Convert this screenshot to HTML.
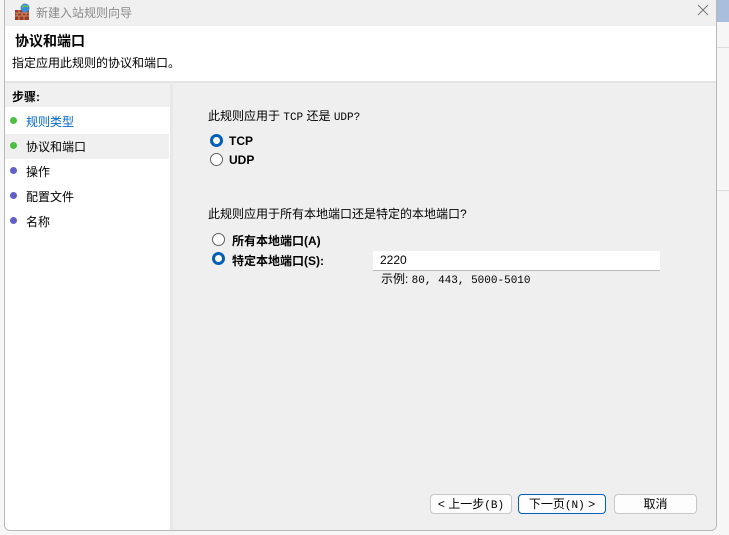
<!DOCTYPE html>
<html><head><meta charset="utf-8"><style>
*{margin:0;padding:0;box-sizing:border-box}
body{width:729px;height:535px;overflow:hidden;background:#f6f6f6;position:relative;font-family:"Liberation Sans","Noto Sans CJK SC",sans-serif;font-size:12px;color:#000}
.a{position:absolute}
.m{font-family:"Liberation Mono","Noto Sans CJK SC",monospace;font-size:11px}
.win{left:4px;top:0;width:713px;height:531px;background:#f0f0f0;border:1px solid #b8b8b8;border-top:none;border-radius:0 0 6px 6px;overflow:hidden}
.rad{position:absolute;width:13px;height:13px;border-radius:50%;border:1px solid #5f5f5f;background:#fff}
.rad.on{border:3.5px solid #005fb8}
.btn{position:absolute;height:20px;border:1px solid #c8c8c8;border-radius:4px;background:#fdfdfd;text-align:center;line-height:18px;font-size:12px}
.dot{position:absolute;width:7px;height:7px;border-radius:50%}
</style></head><body>
<div class="a" style="left:717px;top:0;width:12px;height:22px;background:#a7bfdc"></div>
<div class="a" style="left:717px;top:47px;width:12px;height:1px;background:#ddd"></div>
<div class="a" style="left:717px;top:190px;width:12px;height:1px;background:#ddd"></div>
<div class="win a">
 <div class="a" style="left:0;top:0;width:713px;height:26px;background:#f0f0f0"></div>
 <svg class="a" style="left:9px;top:3px" width="18" height="18" viewBox="0 0 18 18"><rect x="1" y="7" width="14" height="10" fill="#9a3b22"/><path d="M1 10h14M1 13h14M5 7v3M10 7v3M3 10v3M8 10v3M12 10v3M5 13v4M10 13v4" stroke="#d9a080" stroke-width=".8"/><circle cx="11" cy="5" r="4.5" fill="#3a8ed8"/><path d="M8 4q3-2 6 0" stroke="#6cc04a" stroke-width="1.5" fill="none"/></svg>
 <div class="a" style="left:31px;top:4px;color:#8a8a8a;font-size:12px">新建入站规则向导</div>
 <svg class="a" style="left:692px;top:4px" width="12" height="12"><path d="M1 1L11 11M11 1L1 11" stroke="#777" stroke-width="1"/></svg>
 <div class="a" style="left:0;top:26px;width:713px;height:55px;background:#fff"></div>
 <div class="a" style="left:10px;top:31px;font-size:14px;font-weight:bold">协议和端口</div>
 <div class="a" style="left:7px;top:54px">指定应用此规则的协议和端口。</div>
 <div class="a" style="left:0;top:81px;width:713px;height:2px;background:#e4e4e4"></div>
 <div class="a" style="left:0;top:84px;width:165px;height:447px;background:#fff"></div>
 <div class="a" style="left:0;top:84px;width:165px;height:23px;background:#f0f0f0"></div>
 <div class="a" style="left:7px;top:88px;font-weight:bold">步骤:</div>
 <div class="a" style="left:0;top:134px;width:164px;height:25px;background:#f0f0f0"></div>
 <div class="dot" style="left:5px;top:117px;background:#4cc040"></div><div class="a" style="left:21px;top:113px;color:#0066cc">规则类型</div>
 <div class="dot" style="left:5px;top:142px;background:#4cc040"></div><div class="a" style="left:21px;top:138px">协议和端口</div>
 <div class="dot" style="left:5px;top:167px;background:#6060c8"></div><div class="a" style="left:21px;top:163px">操作</div>
 <div class="dot" style="left:5px;top:192px;background:#6060c8"></div><div class="a" style="left:21px;top:188px">配置文件</div>
 <div class="dot" style="left:5px;top:217px;background:#6060c8"></div><div class="a" style="left:21px;top:213px">名称</div>
 <div class="a" style="left:165px;top:84px;width:3px;height:447px;background:#e8e8e8"></div>
 <div class="a" style="left:168px;top:84px;width:545px;height:447px;background:#efefef"></div>
 <div class="a" style="left:203px;top:107px">此规则应用于 <span class="m">TCP</span> 还是 <span class="m">UDP?</span></div>
 <div class="rad on" style="left:205px;top:134px"></div><div class="a" style="left:224px;top:134px;font-weight:bold">TCP</div>
 <div class="rad" style="left:205px;top:153px"></div><div class="a" style="left:224px;top:153px;font-weight:bold">UDP</div>
 <div class="a" style="left:203px;top:205px">此规则应用于所有本地端口还是特定的本地端口?</div>
 <div class="rad" style="left:207px;top:233px"></div><div class="a" style="left:227px;top:232px;font-weight:bold">所有本地端口(A)</div>
 <div class="rad on" style="left:207px;top:252px"></div><div class="a" style="left:227px;top:252px;font-weight:bold">特定本地端口(S):</div>
 <div class="a" style="left:368px;top:251px;width:287px;height:20px;background:#fff;border-bottom:1px solid #bbb;padding:2px 0 0 7px">2220</div>
 <div class="a" style="left:376px;top:270px">示例: <span class="m">80, 443, 5000-5010</span></div>
 <div class="btn" style="left:425px;top:494px;width:82px">&lt; 上一步<span class="m">(B)</span></div>
 <div class="btn" style="left:513px;top:494px;width:88px;border-color:#005fb8">下一页<span class="m">(N)</span> &gt;</div>
 <div class="btn" style="left:609px;top:494px;width:83px">取消</div>
</div>
</body></html>
